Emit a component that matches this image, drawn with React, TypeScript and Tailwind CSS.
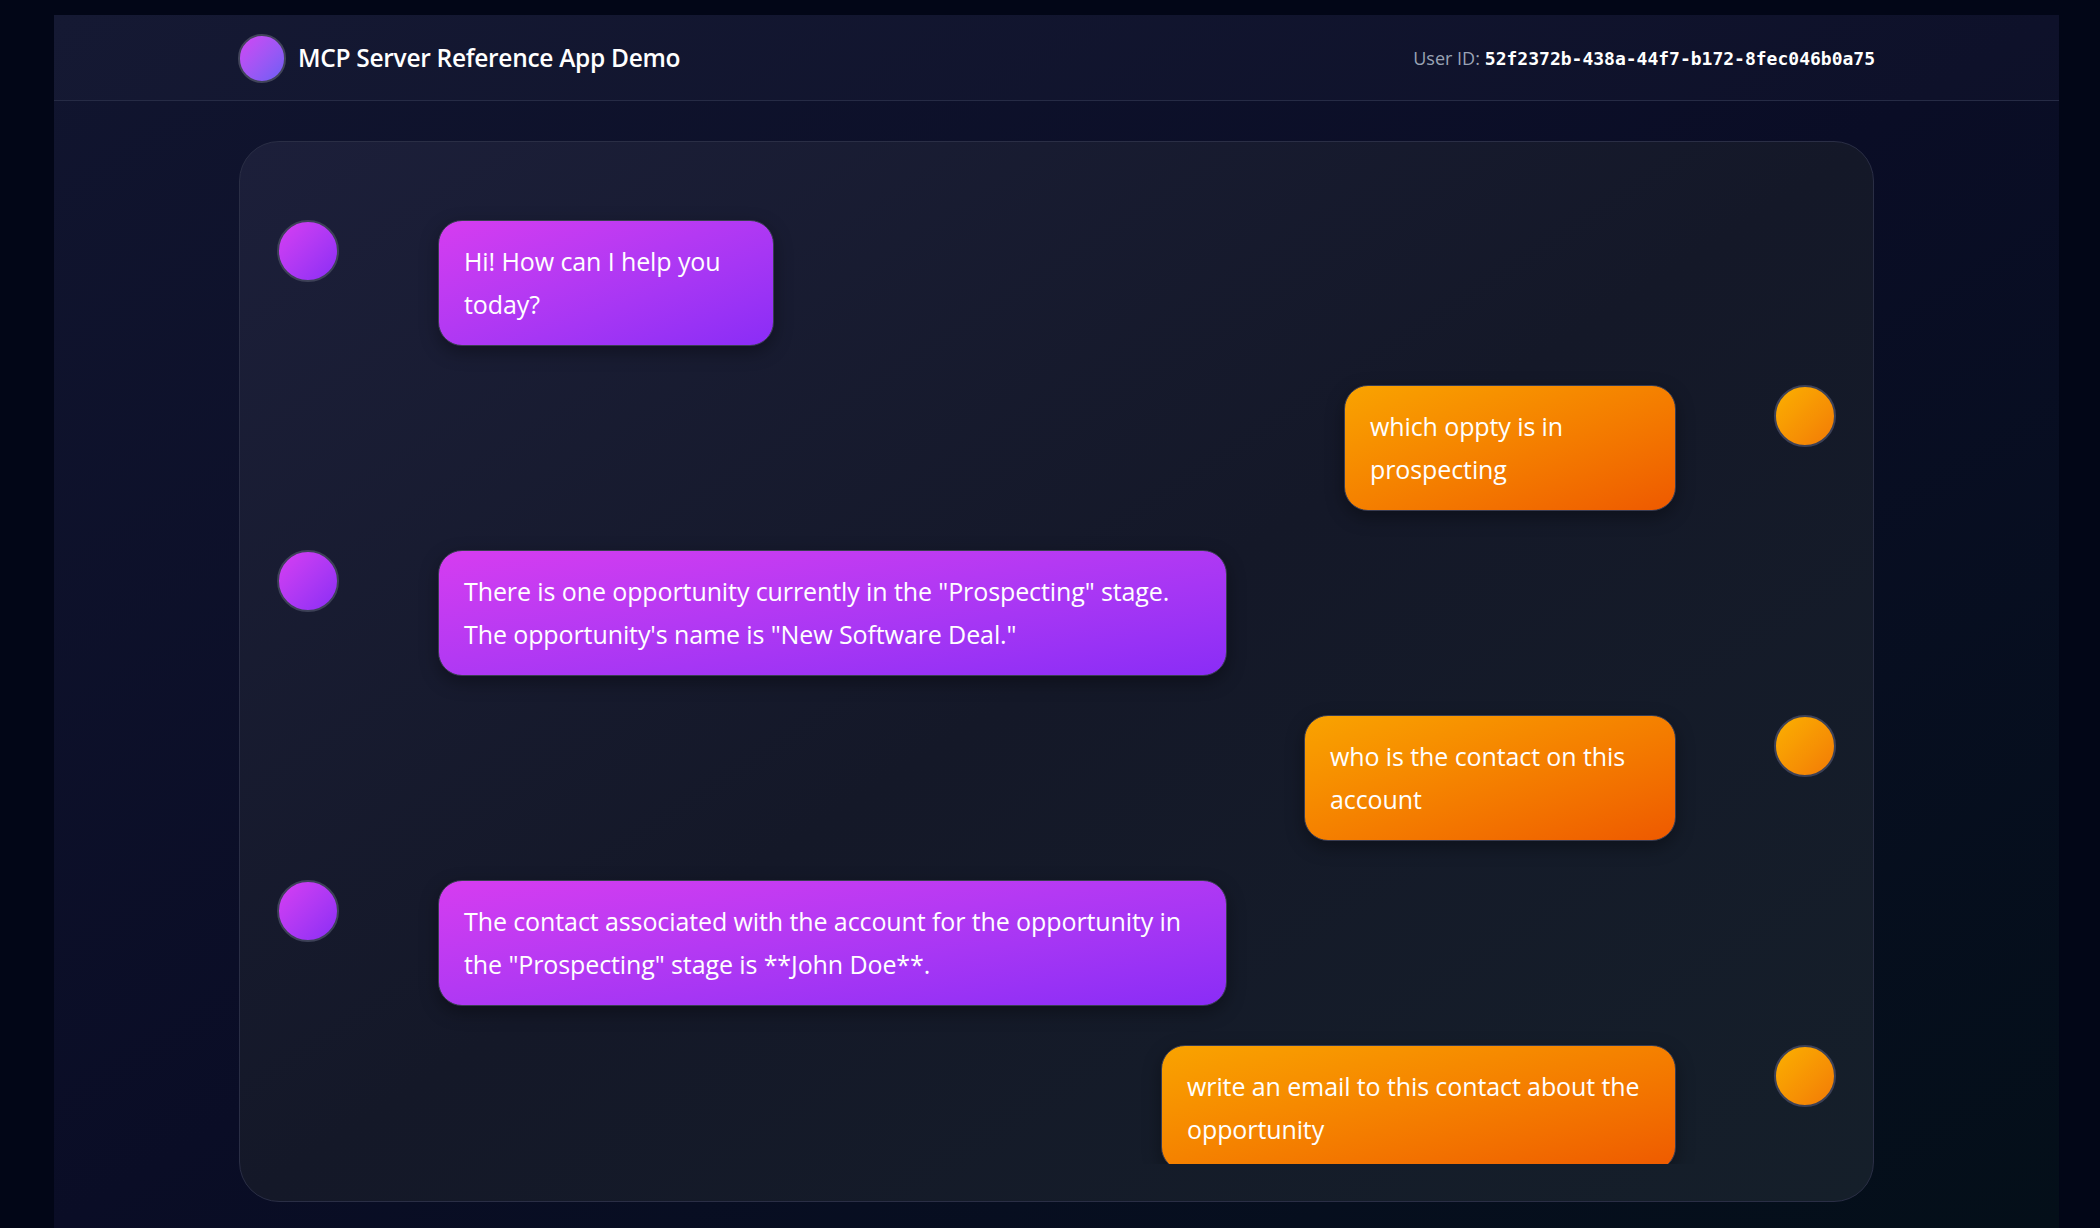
import React from "react";

type Msg = { from: "bot" | "user"; text: string; w: string };

const messages: Msg[] = [
  { from: "bot", text: "Hi! How can I help you today?", w: "w-[336px]" },
  { from: "user", text: "which oppty is in prospecting", w: "w-[332px]" },
  {
    from: "bot",
    text: 'There is one opportunity currently in the "Prospecting" stage. The opportunity\'s name is "New Software Deal."',
    w: "w-[789px]",
  },
  { from: "user", text: "who is the contact on this account", w: "w-[372px]" },
  {
    from: "bot",
    text: 'The contact associated with the account for the opportunity in the "Prospecting" stage is **John Doe**.',
    w: "w-[789px]",
  },
  { from: "user", text: "write an email to this contact about the opportunity", w: "w-[515px]" },
];

function BotAvatar() {
  return (
    <div className="w-[62px] h-[62px] shrink-0 rounded-full border-2 border-[#3d4157] bg-gradient-to-br from-[#d83df2] to-[#8a2cf5]" />
  );
}

function UserAvatar() {
  return (
    <div className="w-[62px] h-[62px] shrink-0 rounded-full border-2 border-[#3d4157] bg-gradient-to-br from-[#fbb000] to-[#f27a06]" />
  );
}

function Bubble({ m }: { m: Msg }) {
  const grad =
    m.from === "bot"
      ? "bg-gradient-to-br from-[#d63cf0] to-[#8a2cf6]"
      : "bg-gradient-to-br from-[#f9a300] to-[#ee5900]";
  return (
    <div
      className={`${m.w} ${grad} shrink-0 rounded-[24px] border border-[#3a3d52] px-[25px] py-[19px] text-white text-[25px] tracking-[-0.1px] leading-[43px] shadow-[0_6px_18px_rgba(0,0,0,0.35)]`}
    >
      {m.text}
    </div>
  );
}

export default function App() {
  return (
    <div
      className="h-[1228px] overflow-hidden bg-[#020617] pt-[15px] pl-[54px]"
      style={{ fontFamily: '"Open Sans", "Noto Sans", sans-serif' }}
    >
      <div className="w-[2005px] h-[1213px] flex flex-col bg-gradient-to-br from-[#11152f] via-[#0a0d26] to-[#040f19]">
        <header className="h-[86px] shrink-0 border-b border-[#262b45] bg-white/[0.02]">
          <div className="w-[1637px] mx-auto h-full flex items-center justify-between pt-[2px]">
            <div className="flex items-center gap-[12px]">
              <div className="w-[48px] h-[49px] rounded-full border-2 border-[#41445a] bg-gradient-to-br from-[#d244f4] to-[#6a5df5]" />
              <h1 className="text-white text-[24.5px] font-semibold tracking-[-0.3px]">
                MCP Server Reference App Demo
              </h1>
            </div>
            <div className="flex items-center gap-[5px]">
              <span className="text-[#9aa3b5] text-[18px]">User ID:</span>
              <span
                className="text-white text-[18px] font-bold"
                style={{ fontFamily: '"DejaVu Sans Mono", "Liberation Mono", monospace' }}
              >
                52f2372b-438a-44f7-b172-8fec046b0a75
              </span>
            </div>
          </div>
        </header>

        <main className="w-[1635px] mx-auto mt-[40px] h-[1061px] shrink-0 rounded-[40px] border border-[#2a2e45] bg-gradient-to-br from-[#1c1f3a] via-[#141828] to-[#151f2a] px-[37px] pt-[38px] pb-[37px] flex flex-col">
          <div className="flex-1 overflow-hidden pt-[40px] flex flex-col gap-[39px]">
            {messages.map((m, i) =>
              m.from === "bot" ? (
                <div key={i} className="flex items-start gap-[99px]">
                  <BotAvatar />
                  <Bubble m={m} />
                </div>
              ) : (
                <div key={i} className="flex items-start justify-end gap-[98px]">
                  <Bubble m={m} />
                  <UserAvatar />
                </div>
              )
            )}
          </div>
        </main>
      </div>
    </div>
  );
}
